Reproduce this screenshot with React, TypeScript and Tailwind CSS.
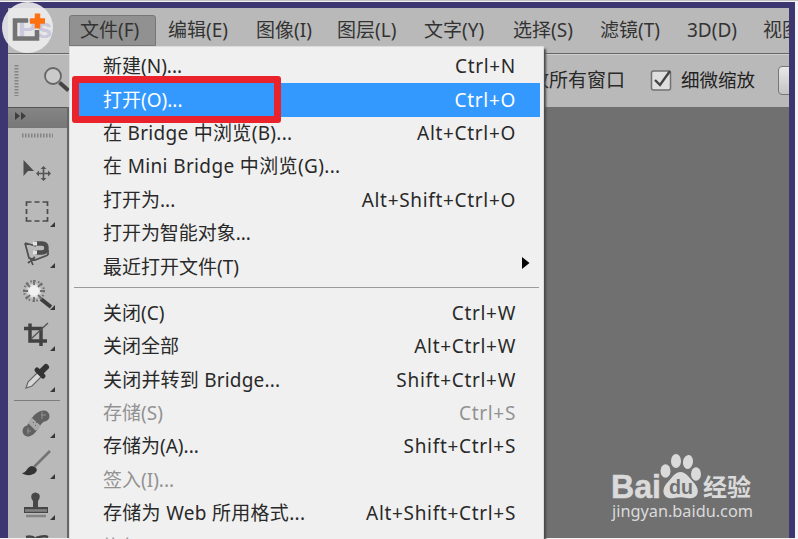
import React from "react";

type Row = { label: string; keys?: string; dim?: boolean; active?: boolean; arrow?: boolean; spacing?: string };

const openRows: Row[] = [
  { label: "新建(N)...", keys: "Ctrl+N" },
  { label: "打开(O)...", keys: "Ctrl+O", active: true },
  { label: "在 Bridge 中浏览(B)...", keys: "Alt+Ctrl+O", spacing: "tracking-[0.3px]" },
  { label: "在 Mini Bridge 中浏览(G)...", spacing: "tracking-[0.36px]" },
  { label: "打开为...", keys: "Alt+Shift+Ctrl+O" },
  { label: "打开为智能对象...", spacing: "tracking-[-0.05px]" },
  { label: "最近打开文件(T)", arrow: true },
];

const saveRows: Row[] = [
  { label: "关闭(C)", keys: "Ctrl+W" },
  { label: "关闭全部", keys: "Alt+Ctrl+W" },
  { label: "关闭并转到 Bridge...", keys: "Shift+Ctrl+W", spacing: "tracking-[0.2px]" },
  { label: "存储(S)", keys: "Ctrl+S", dim: true },
  { label: "存储为(A)...", keys: "Shift+Ctrl+S" },
  { label: "签入(I)...", dim: true },
  { label: "存储为 Web 所用格式...", keys: "Alt+Shift+Ctrl+S", spacing: "tracking-[0.3px]" },
  { label: "恢复(V)", keys: "F12", dim: true },
];

const menus = [
  { label: "编辑(E)", width: "w-[88px]" },
  { label: "图像(I)", width: "w-[81px]" },
  { label: "图层(L)", width: "w-[87px]" },
  { label: "文字(Y)", width: "w-[89px]" },
  { label: "选择(S)", width: "w-[87px]" },
  { label: "滤镜(T)", width: "w-[87px]" },
  { label: "3D(D)", width: "w-[76px]" },
  { label: "视图(V)", width: "w-[60px]" },
];

function MenuRow({ label, keys, dim, active, arrow, spacing = "tracking-normal" }: Row) {
  const tone = active ? "bg-[#3399ff] text-white" : dim ? "text-[#929292]" : "text-[#292929]";
  return (
    <div className={`mr-[3px] ml-[3px] flex h-[33.4px] shrink-0 items-center justify-between pl-[30px] pr-[24px] ${tone}`}>
      <span className={spacing}>{label}</span>
      {keys && <span className="tracking-[0.68px]">{keys}</span>}
      {arrow && (
        <svg className="-mr-[14px] -mt-[8px]" width="8" height="12" viewBox="0 0 8 12"><path d="M0 0 7.5 6 0 12Z" fill="#050505" /></svg>
      )}
    </div>
  );
}

function Toolbar() {
  return (
    <svg className="block" width="59" height="411" viewBox="8 128 59 411" fill="none">
      <path d="M22 135.5H53" stroke="#858585" strokeWidth="4" strokeDasharray="1.6 1.4" />
      <path d="M23.5 160V176L28 171H34Z" fill="#4d4d4d" />
      <path d="M43.5 168V179M38 173.5H49" stroke="#555" strokeWidth="1.6" />
      <path d="m43.5 166 3 3h-6zm0 15 3-3h-6zM36 173.5l3-3v6zm15 0-3-3v6z" fill="#555" />
      <path d="M26.5 206v-4h5m3 0h5m3 0h5v4m0 3v5m0 3v4h-5m-3 0h-5m-3 0h-5v-4m0-3v-5" stroke="#4b4b4b" strokeWidth="1.7" />
      <path d="M25 243 29 258 35 260 48 255M25 243 36 246M30 258 33 265M28 263 35 257M48 255V250" stroke="#505050" strokeWidth="1.8" />
      <path d="M34 243.5H42Q46.5 243.5 46.5 248T42 252.5H35" stroke="#4d4d4d" strokeWidth="4.5" />
      <path d="M33 243.5H37M33 252.5H37" stroke="#e2e2e2" strokeWidth="4" />
      <path d="M41 299 51 307" stroke="#3c3c3c" strokeWidth="4" />
      <circle cx="34" cy="291" r="7" fill="#dfdfdf" />
      <circle cx="34" cy="291" r="5" fill="#f1f1f1" />
      <path d="M34 280v5m0 12v5M23 291h5m12 0h5M26 283l4 4m8 8 4 4m0-16-4 4m-8 8-4 4" stroke="#707070" strokeWidth="1.8" />
      <circle cx="34" cy="291" r="10" stroke="#707070" strokeWidth="2" strokeDasharray="1.5 2.42" />
      <path d="M30 323.5V341H47M24 328.5H41V346" stroke="#414141" strokeWidth="3.5" />
      <path d="M31 339 48 323" stroke="#555" strokeWidth="1.3" />
      <path d="m26 388 2-6 10-10 4 4-10 10Z" fill="#d8d8d8" stroke="#666" strokeWidth="1.2" />
      <path d="m37 370 6 6" stroke="#333" strokeWidth="5" strokeLinecap="round" />
      <path d="m42 371 4-4" stroke="#333" strokeWidth="6" strokeLinecap="round" />
      <path d="M14 400.5H60" stroke="#7d7d7d" />
      <path d="M28 431C34 430 35 417 44 416" stroke="#616161" strokeWidth="11" strokeLinecap="round" />
      <path d="m32 418 9 8-5 5-8-8Z" fill="#a9a9a9" />
      <path d="M27 431H31M28 428v6M41 415h5M42 412v7" stroke="#929292" />
      <path d="m33 422 1 1m2-1 1 1m-2 2 1 1" stroke="#666" />
      <path d="M34 467 50 451" stroke="#737373" strokeWidth="2.5" />
      <path d="M22 473C27 473 26 467 32 466Q39 468 36 472C33 476 25 476 22 473Z" fill="#333" />
      <path d="M32 494Q35 491 39 494Q41 497 38 501V507H48V513H24V507H33V501Q30 498 32 494Z" fill="#474747" />
      <path d="M25 510.5H47M26 516H46" stroke="#858585" strokeWidth="2.4" />
      <path d="M26 537q7-2 10 3M36 538q8-3 12-1" stroke="#444" strokeWidth="2.5" />
      {[227, 268, 310, 351, 392, 438, 479, 520].map((y) => (
        <path key={y} d={`M55 ${y - 5}V${y}H50Z`} fill="#383838" />
      ))}
    </svg>
  );
}

function Watermark() {
  return (
    <div className="absolute top-[452px] left-[611px] h-[75px] w-[150px]">
      <svg width="150" height="75" viewBox="611 452 150 75" fill="#dadada">
        <text x="611" y="497.5" stroke="#dadada" strokeWidth=".5" fontFamily="Liberation Sans" fontWeight="700" fontSize="33" textLength="50" lengthAdjust="spacingAndGlyphs">Bai</text>
        <ellipse cx="665.5" cy="471" rx="5" ry="6.7" />
        <ellipse cx="676" cy="461" rx="5" ry="7" />
        <ellipse cx="688" cy="462" rx="5" ry="7" transform="rotate(9 688 462)" />
        <ellipse cx="696" cy="474" rx="5" ry="6.7" />
        <path d="M673 476Q680.5 468 688 476L695 484C701 492 697 500 687 498Q680 496.5 674 498C664 500 660 491 667 483Z" />
        <text x="669" y="494" fill="#707070" fontFamily="Liberation Sans" fontWeight="700" fontSize="20" textLength="24" lengthAdjust="spacingAndGlyphs">du</text>
        <text x="703" y="495.5" fontFamily="Noto Sans CJK SC" fontWeight="700" fontSize="24" textLength="48">经验</text>
        <text x="612" y="517" fontFamily="Noto Sans" fontSize="17" textLength="141" lengthAdjust="spacingAndGlyphs">jingyan.baidu.com</text>
      </svg>
    </div>
  );
}

export default function App() {
  return (
    <div className="relative h-[539px] w-[798px] overflow-hidden bg-[#f3f3f3] pt-[2px] font-['Noto_Sans','Noto_Sans_CJK_SC',sans-serif] text-[19px] leading-none whitespace-nowrap text-[#333]">
      <div className="h-[536px] w-[795px] overflow-hidden bg-[#3d3771] pt-[6px] pr-[6px] pl-[8px]">
        <header className="flex h-[45px] items-start overflow-hidden bg-[#b9b9b9] pt-[7px] pl-[61px]">
          <div className="mr-[12px] flex h-[31px] w-[87px] shrink-0 items-center rounded-t-[3px] border border-[#777] bg-[#919191] pl-[10px] text-[19px]">文件(F)</div>
          {menus.map((m) => (
            <span key={m.label} className={`flex h-[30px] shrink-0 items-center text-[19px] ${m.width}`}>{m.label}</span>
          ))}
        </header>
        <div className="flex h-[54px] items-start overflow-hidden border-t border-[#666] bg-[#b9b9b9] shadow-[inset_0_1px_#cecece]">
          <svg className="shrink-0" width="61" height="53" viewBox="8 54 61 53" fill="none">
            <path d="M16.5 65V96" stroke="#858585" strokeWidth="4" strokeDasharray="1.5 1.5" />
            <circle cx="53" cy="76" r="8" fill="#cacaca" stroke="#666" strokeWidth="1.8" />
            <path d="m59.5 82.5 9 8" stroke="#444" strokeWidth="4" />
          </svg>
          <div className="ml-[442px] flex h-[53px] shrink-0 items-center">
            <span className="w-[137px] text-[19px] text-[#292929]">缩放所有窗口</span>
            <svg className="mr-[8px] ml-[1px]" width="24" height="25" viewBox="0 0 24 25" fill="none">
              <rect x="2.5" y="3" width="19" height="19" rx="2" fill="#dfdfdf" stroke="#727272" strokeWidth="1.5" />
              <path d="m6 12 5 5L21 3" stroke="#444" strokeWidth="2.4" />
            </svg>
            <span className="w-[97px] text-[18.5px] text-[#222]">细微缩放</span>
            <div className="h-[29px] w-[30px] rounded-[4px] border border-[#777] bg-gradient-to-b from-[#e8e8e8] to-[#c4c4c4]" />
          </div>
        </div>
        <main className="flex h-[432px] bg-[#707070]">
          <aside className="h-full w-[61px] shrink-0 border-r-2 border-[#666] bg-[#b9b9b9]">
            <div className="h-[21px] border-t border-[#555] bg-gradient-to-b from-[#858585] to-[#777]">
              <svg width="30" height="18" viewBox="8 108 30 18"><path d="m15 112 5 4-5 4zm6 0 5 4-5 4z" fill="#3e3e3e" /></svg>
            </div>
            <Toolbar />
          </aside>
        </main>
      </div>

      <nav className="absolute top-[46px] left-[69px] flex h-[500px] w-[475px] flex-col overflow-hidden border border-[#dcdcdc] bg-[#f0f0f0] pt-[3px] shadow-[2px_3px_2px_#494949]">
        {openRows.map((r) => <MenuRow key={r.label} {...r} />)}
        <div className="mx-[4px] mt-[3px] mb-[9px] h-px shrink-0 bg-[#9a9a9a]" />
        {saveRows.map((r) => <MenuRow key={r.label} {...r} />)}
      </nav>
      <div className="absolute top-[76px] left-[72px] h-[47px] w-[209px] rounded-[3px] border-[7px] border-[#e9222b]" />
      <div className="absolute top-0 left-0 h-px w-full bg-[#c4c4c4]" />
      <div className="absolute top-[2px] left-[2px] h-[51px] w-[51px] rounded-full bg-[#ededed]/90">
        <svg width="51" height="51" viewBox="2 2 51 51" fill="none">
          <text x="18" y="38" fill="#c9c8dc" fontFamily="Liberation Sans" fontSize="28" fontWeight="700">Ps</text>
          <path d="M28 20.5H15V38.5H37V30" stroke="#737373" strokeWidth="4.6" />
          <path d="M37.5 13.5V28.5M30 21H45" stroke="#ff7010" strokeWidth="5.5" />
        </svg>
      </div>
      <Watermark />
    </div>
  );
}
